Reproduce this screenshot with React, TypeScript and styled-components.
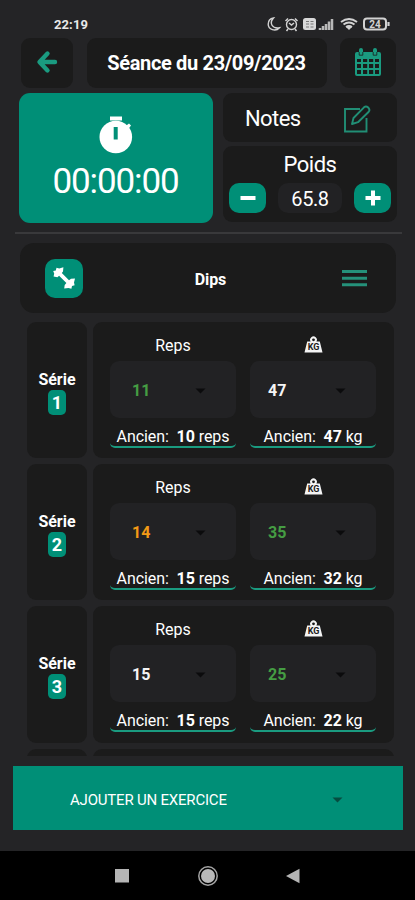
import React from "react";
import styled, { createGlobalStyle } from "styled-components";

const GREEN = "#008f77";
const ACCENT = "#1a9b80";

const GlobalStyle = createGlobalStyle`
  * { box-sizing: border-box; }
  body { margin: 0; background: #242426; }
  svg { display: block; flex: none; }
`;

const Screen = styled.div`
  width: 415px;
  height: 900px;
  display: flex;
  flex-direction: column;
  overflow: hidden;
  background: #242426;
  color: #fff;
  font-family: Roboto, "Liberation Sans", sans-serif;
`;

const StatusBar = styled.div`
  height: 38px;
  padding: 10px 22px 0 54px;
  display: flex;
  justify-content: space-between;
  align-items: center;
`;

const Clock = styled.span`
  font-size: 13px;
  font-weight: 700;
  color: #e8e8e8;
  letter-spacing: 0.1px;
`;

const Panel = styled.div<{ $radius?: number }>`
  background: #1b1b1b;
  border-radius: ${(p) => p.$radius ?? 9}px;
  display: flex;
  align-items: center;
  justify-content: center;
`;

const Header = styled.header`
  display: grid;
  grid-template-columns: 52px 240px 56px;
  column-gap: 13.5px;
  height: 50px;
  margin-left: 21px;
`;

const HeaderButton = styled(Panel)`
  padding-bottom: 2px;
`;

const Title = styled.h1`
  margin: 0;
  font-size: 20px;
  font-weight: 700;
  letter-spacing: -0.34px;
  white-space: nowrap;
`;

const Overview = styled.section`
  display: grid;
  grid-template-columns: 194px 174px;
  column-gap: 10px;
  height: 130px;
  margin: 5px 0 0 19px;
`;

const Timer = styled.div`
  background: ${GREEN};
  border-radius: 11px;
  display: flex;
  flex-direction: column;
  align-items: center;
  padding-top: 22px;
`;

const TimerValue = styled.div`
  font-size: 35px;
  line-height: 40px;
  letter-spacing: -1.1px;
  margin-top: 8px;
  margin-right: 1px;
`;

const SidePanels = styled.div`
  display: grid;
  grid-template-rows: 49px 76px;
  row-gap: 4px;
`;

const Notes = styled(Panel)`
  justify-content: space-between;
  padding: 2px 26px 0 22px;
  font-size: 22px;
  letter-spacing: -0.6px;
`;

const Weight = styled(Panel)`
  flex-direction: column;
  justify-content: flex-start;
  padding: 5px 6px 0;
`;

const WeightLabel = styled.div`
  font-size: 22px;
  line-height: 27px;
  letter-spacing: -0.5px;
`;

const Stepper = styled.div`
  width: 100%;
  display: flex;
  justify-content: space-between;
  margin-top: 5px;
`;

const StepButton = styled.button`
  width: 37px;
  height: 30px;
  border: 0;
  padding: 0;
  border-radius: 10px;
  background: ${GREEN};
  display: flex;
  align-items: center;
  justify-content: center;
`;

const WeightValue = styled.div`
  width: 64px;
  height: 30px;
  border-radius: 10px;
  background: #222224;
  font-size: 20px;
  line-height: 33px;
  letter-spacing: -0.4px;
  text-align: center;
`;

const Divider = styled.div`
  height: 2px;
  margin: 9px 13px 9px 15px;
  background: #39393b;
`;

const Exercise = styled(Panel)`
  height: 70px;
  flex: none;
  margin: 0 19px 0 20px;
  padding: 0 29px 0 25px;
  justify-content: space-between;
`;

const ExerciseIcon = styled.div`
  width: 38px;
  height: 39px;
  border-radius: 10px;
  background: ${GREEN};
  display: flex;
  align-items: center;
  justify-content: center;
`;

const ExerciseName = styled.div`
  font-size: 16px;
  font-weight: 700;
  letter-spacing: -0.1px;
  padding: 2px 4px 0 0;
`;

const SetList = styled.div`
  height: 434px;
  flex: none;
  margin: 9px 21px 0 27px;
  overflow: hidden;
  display: flex;
  flex-direction: column;
  gap: 6px;
`;

const SetRow = styled.div`
  flex: none;
  height: 136.2px;
  display: grid;
  grid-template-columns: 60px 301px;
  column-gap: 6px;
`;

const SetLabel = styled(Panel)`
  flex-direction: column;
  padding-top: 5px;
  font-size: 16px;
  font-weight: 700;
  line-height: 20px;
`;

const SetNumber = styled.div`
  width: 18px;
  height: 25px;
  border-radius: 5px;
  background: ${GREEN};
  font-size: 18px;
  line-height: 26px;
  text-align: center;
`;

const SetDetail = styled(Panel)`
  align-items: flex-start;
  justify-content: flex-start;
  padding-left: 17px;
  gap: 14px;
`;

const Column = styled.div`
  width: 126px;
  display: flex;
  flex-direction: column;
`;

const ColumnTitle = styled.div`
  height: 39px;
  padding-top: 8px;
  font-size: 16px;
  display: flex;
  align-items: center;
  justify-content: center;
`;

const IconTitle = styled(ColumnTitle)`
  padding-top: 6px;
`;

const Select = styled.div<{ $tone: string; $inset: number }>`
  height: 57px;
  border-radius: 9px;
  background: #222224;
  color: ${(p) => p.$tone};
  font-size: 16px;
  font-weight: 700;
  display: flex;
  align-items: center;
  justify-content: space-between;
  padding: 2px 30px 0 ${(p) => p.$inset}px;
`;

const Previous = styled.div`
  height: 26px;
  margin-top: 4px;
  padding-top: 1px;
  border-bottom: 2px solid ${ACCENT};
  border-radius: 5px;
  font-size: 16px;
  line-height: 27px;
  letter-spacing: -0.07px;
  text-align: center;
  white-space: pre;
`;

const AddBar = styled.div`
  height: 64px;
  flex: none;
  margin: 10px 12px 0 13px;
  padding: 4px 60px 0 57px;
  background: ${GREEN};
  display: flex;
  align-items: center;
  justify-content: space-between;
  font-size: 15px;
  letter-spacing: -0.2px;
`;

const NavBar = styled.nav`
  height: 49px;
  margin-top: auto;
  background: #000;
  display: flex;
  align-items: center;
  padding-left: 114px;
`;

const NavGap = styled.span<{ $w: number }>`
  width: ${(p) => p.$w}px;
`;

const StatusIcons = () => (
  <svg width="126" height="16" viewBox="0 0 126 16" fill="none" stroke="#d2d2d2">
    <path d="M6.5 2C2 7 5 13 12.5 11.8C8.5 16.2 1.2 13.5 1.2 8.3C1.2 5 3.4 2.4 6.5 2Z" strokeWidth="1.4" />
    <circle cx="24.5" cy="8.5" r="5" strokeWidth="1.4" />
    <path d="M18.5 5L21 2.5M30.5 5L28 2.5M22 7l2.5 2 2.5-2M21 13l-1.5 2M28 13l1.5 2" strokeWidth="1.5" />
    <rect x="36" y="2" width="13" height="12" rx="2.5" fill="#d8d8d8" stroke="none" />
    <path d="M39 5.5h3m1.5 0h3M39 8h3m1.5 0h3M39 11h3m1.5 0h3" stroke="#777" />
    <path d="M53 14V12M56 14v-4M59 14V8M62 14V5.5M65 14V3" strokeWidth="2.5" stroke="#b8b8b8" />
    <path d="M74 6Q82 0 90 6M76.5 8.5q5.5-4 11 0M79 11q3-2 6 0" strokeWidth="2" />
    <path d="M79 11h6l-3 3z" fill="#d2d2d2" stroke="none" />
    <rect x="97" y="2.5" width="22" height="11" rx="3" strokeWidth="2" />
    <path d="M121.5 6v4" strokeWidth="2.2" />
    <text x="108" y="11.8" textAnchor="middle" fontSize="10" fontWeight="700" fill="#d2d2d2" stroke="none">24</text>
  </svg>
);

const BackIcon = () => (
  <svg width="22" height="24" viewBox="0 0 22 24" fill="none" stroke={ACCENT} strokeWidth="4.4" strokeLinecap="round">
    <path d="M11.5 3.5L3.5 12l8 8.5M4 12h15" strokeLinejoin="round" />
  </svg>
);

const CalendarIcon = () => (
  <svg width="26" height="28" viewBox="0 0 26 28">
    <path fill={ACCENT} d="M2 4H4V2Q4 0 6 0T8 2V4H18V2Q18 0 20 0T22 2V4H24Q26 4 26 6V26Q26 28 24 28H2Q0 28 0 26V6Q0 4 2 4Z" />
    <path fill="#1b1b1b" d="M2 11h4v3H2zm6 0h4.2v3H8zm6 0h4.2v3H14zm6 0h4v3h-4zM2 16h4v4H2zm6 0h4.2v4H8zm6 0h4.2v4H14zm6 0h4v4h-4zM2 22h4v4H2zm6 0h4.2v4H8zm6 0h4.2v4H14zm6 0h4v4h-4z" />
    <path d="M4.2 4v3.2h3.6V4M18.2 4v3.2h3.6V4" fill="none" stroke="#1b1b1b" strokeWidth=".8" />
  </svg>
);

const StopwatchIcon = () => (
  <svg width="34" height="39" viewBox="0 0 34 39">
    <rect x="11" y="1.5" width="12" height="4" fill="#fff" />
    <circle cx="16.8" cy="22" r="16.3" fill="#fff" />
    <path d="M26 11.5l4-3 2 2-3 4z" fill="#fff" />
    <rect x="14.7" y="12" width="4" height="12.5" fill={GREEN} />
  </svg>
);

const EditIcon = () => (
  <svg width="28" height="28" viewBox="0 0 28 28" fill="none" stroke="#218e75" strokeWidth="1.9">
    <path d="M17 4H2V26.5H23.5V13" />
    <path d="M9 19l1.5-6L21 2.3Q23 .6 25.2 2.5Q27.5 5 25.5 7L15 17.2Z" strokeLinejoin="round" />
  </svg>
);

const StepIcon = ({ plus = false }: { plus?: boolean }) => (
  <svg width="16" height="16" viewBox="0 0 16 16" stroke="#fff" strokeWidth="4">
    <path d={plus ? "M.5 8h15M8 .5v15" : "M.5 8h15"} />
  </svg>
);

const DumbbellIcon = () => (
  <svg width="24" height="24" viewBox="0 0 24 24" fill="#fff">
    <path d="M1.2 5L3.8 4.4 4.5 1.8 7.2 2.4 11.4 1.2 11 5.6 9.8 7 17 14.2 19 12.8 23 12.6 22 16.5 22.6 19.2 20 20 19.4 22.8 16.5 22 12.2 22.6 12.7 19 14.4 16.9 7.1 9.7 5.4 11.2 1.6 10.6 2.2 7.5Z" />
  </svg>
);

const MenuIcon = () => (
  <svg width="25" height="18" viewBox="0 0 25 18" stroke="#25917a" strokeWidth="3">
    <path d="M0 2.5h25M0 9.2h25M0 15.8h25" />
  </svg>
);

const KilogramIcon = () => (
  <svg width="19" height="17" viewBox="0 0 19 17">
    <path d="M3.2 5.5h3.4A3.4 3.4 0 1 1 12.4 5.5h3.4L18.5 16.5H.5Z" fill="#f4f4f4" />
    <circle cx="9.5" cy="3.8" r="1.4" fill="#1b1b1b" />
    <text x="9.5" y="14.2" textAnchor="middle" fontSize="9" fontWeight="700" fill="#1b1b1b">KG</text>
  </svg>
);

const Caret = ({ color = "#0b0b0c" }: { color?: string }) => (
  <svg width="11" height="6" viewBox="0 0 11 6">
    <path d="M.5 .5h10l-5 5z" fill={color} />
  </svg>
);

const WHITE = "#f5f5f5";
const LIFT = "#459d43";
const ORANGE = "#f39a16";

const sets = [
  { reps: "11", repsTone: LIFT, kg: "47", kgTone: WHITE, oldReps: "10", oldKg: "47" },
  { reps: "14", repsTone: ORANGE, kg: "35", kgTone: LIFT, oldReps: "15", oldKg: "32" },
  { reps: "15", repsTone: WHITE, kg: "25", kgTone: LIFT, oldReps: "15", oldKg: "22" },
];

export default function App() {
  return (
    <Screen>
      <GlobalStyle />
      <StatusBar>
        <Clock>22:19</Clock>
        <StatusIcons />
      </StatusBar>
      <Header>
        <HeaderButton><BackIcon /></HeaderButton>
        <Panel><Title>Séance du 23/09/2023</Title></Panel>
        <HeaderButton><CalendarIcon /></HeaderButton>
      </Header>
      <Overview>
        <Timer>
          <StopwatchIcon />
          <TimerValue>00:00:00</TimerValue>
        </Timer>
        <SidePanels>
          <Notes>Notes<EditIcon /></Notes>
          <Weight>
            <WeightLabel>Poids</WeightLabel>
            <Stepper>
              <StepButton aria-label="Moins"><StepIcon /></StepButton>
              <WeightValue>65.8</WeightValue>
              <StepButton aria-label="Plus"><StepIcon plus /></StepButton>
            </Stepper>
          </Weight>
        </SidePanels>
      </Overview>
      <Divider />
      <Exercise $radius={14}>
        <ExerciseIcon><DumbbellIcon /></ExerciseIcon>
        <ExerciseName>Dips</ExerciseName>
        <MenuIcon />
      </Exercise>
      <SetList>
        {sets.map((s, i) => (
          <SetRow key={i}>
            <SetLabel>
              Série
              <SetNumber>{i + 1}</SetNumber>
            </SetLabel>
            <SetDetail>
              <Column>
                <ColumnTitle>Reps</ColumnTitle>
                <Select $tone={s.repsTone} $inset={22}>{s.reps}<Caret /></Select>
                <Previous>Ancien:  <b>{s.oldReps}</b> reps</Previous>
              </Column>
              <Column>
                <IconTitle><KilogramIcon /></IconTitle>
                <Select $tone={s.kgTone} $inset={18}>{s.kg}<Caret /></Select>
                <Previous>Ancien:  <b>{s.oldKg}</b> kg</Previous>
              </Column>
            </SetDetail>
          </SetRow>
        ))}
        <SetRow>
          <Panel />
          <Panel />
        </SetRow>
      </SetList>
      <AddBar>AJOUTER UN EXERCICE<Caret color="#064c40" /></AddBar>
      <NavBar>
        <svg width="15" height="15"><rect x="1" y="1" width="14" height="13.5" fill="#b5b5b5" /></svg>
        <NavGap $w={68} />
        <svg width="22" height="22" viewBox="0 0 22 22">
          <circle cx="11" cy="11" r="9.2" fill="none" stroke="#a5a5a5" strokeWidth="1.5" />
          <circle cx="11" cy="11" r="7" fill="#b9b9b9" />
        </svg>
        <NavGap $w={67} />
        <svg width="14" height="16"><path d="M0 8L13.5 .8V15.2Z" fill="#b5b5b5" /></svg>
      </NavBar>
    </Screen>
  );
}
